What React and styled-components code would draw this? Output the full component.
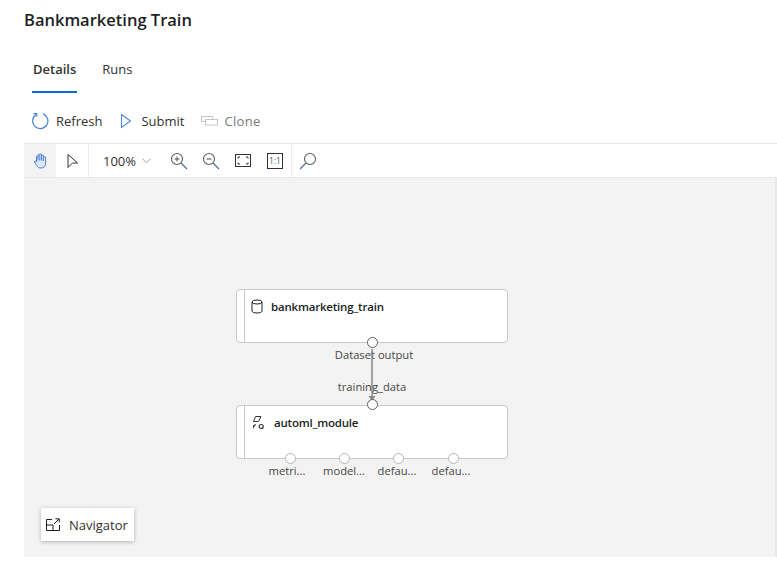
import React from "react";
import styled, { createGlobalStyle } from "styled-components";

const GlobalStyle = createGlobalStyle`
  html, body {
    margin: 0;
    padding: 0;
    background: #fff;
    overflow: hidden;
  }
  body {
    font-family: "Open Sans", "Noto Sans", "Liberation Sans", sans-serif;
    color: #201f1e;
  }
`;

const Page = styled.div`
  width: 777px;
  height: 577px;
  display: flex;
  flex-direction: column;
`;

const Title = styled.h1`
  margin: 0;
  padding: 9px 0 0 24px;
  height: 33px;
  font-size: 16.5px;
  line-height: 22px;
  font-weight: 600;
  color: #201f1e;
`;

const Tabs = styled.nav`
  display: flex;
  gap: 24px;
  margin-top: 12px;
  padding-left: 32px;
  height: 46px;
`;

const Tab = styled.div`
  height: 37px;
  box-sizing: content-box;
  padding: 0 1px;
  font-size: 13px;
  line-height: 30px;
  font-weight: ${({ $active }) => ($active ? 600 : 400)};
  color: #323130;
  border-bottom: 2px solid ${({ $active }) => ($active ? "#0f6cd6" : "transparent")};
`;

const CommandBar = styled.div`
  display: flex;
  align-items: center;
  height: 40px;
  margin-top: 1px;
  padding-left: 31px;
`;

const Command = styled.button`
  display: flex;
  align-items: center;
  gap: ${({ $gap }) => $gap}px;
  margin-right: ${({ $space }) => $space}px;
  padding: 0;
  border: 0;
  background: none;
  font: inherit;
  font-size: 13px;
  letter-spacing: ${({ disabled }) => (disabled ? "0.3px" : "0")};
  color: ${({ disabled }) => (disabled ? "#7a7876" : "#323130")};
`;

const Designer = styled.section`
  flex: 1;
  display: flex;
  flex-direction: column;
  margin-left: 24px;
  margin-bottom: 20px;
  margin-top: 2px;
`;

const Toolbar = styled.div`
  display: flex;
  align-items: stretch;
  height: 33px;
  border-top: 1px solid #e8e8e8;
  background: #fff;
`;

const ToolButton = styled.div`
  width: ${({ $width }) => $width || 32}px;
  display: flex;
  align-items: center;
  justify-content: center;
  background: ${({ $active }) => ($active ? "#f3f3f3" : "#fff")};
`;

const ToolDivider = styled.div`
  width: 1px;
  background: #ececec;
`;

const ZoomSelect = styled.div`
  display: flex;
  align-items: center;
  gap: 6px;
  width: 55px;
  margin-left: 14px;
  margin-right: 5px;
  font-size: 13px;
  color: #323130;
`;

const RatioBox = styled.div`
  width: 16px;
  height: 16px;
  border: 1px solid #323130;
  box-sizing: border-box;
  font-size: 8.5px;
  line-height: 14px;
  text-align: center;
  color: #605e5c;
`;

const Canvas = styled.div`
  position: relative;
  flex: 1;
  background: #f3f3f3;
  border-top: 1px solid #e8e8e8;
  border-right: 2px solid #e8e8e8;
`;

const Node = styled.div`
  position: absolute;
  left: 212px;
  top: ${({ $top }) => $top}px;
  width: 270px;
  height: 52px;
  display: flex;
  background: #fff;
  border: 1px solid #c8c8c8;
  border-radius: 4px;
`;

const NodeStripe = styled.div`
  width: 7px;
  border-right: 1px solid #c8c8c8;
`;

const NodeHead = styled.div`
  display: flex;
  align-items: center;
  gap: ${({ $gap }) => $gap}px;
  height: 33px;
  padding-left: ${({ $pad }) => $pad}px;
  font-size: 11.5px;
  font-weight: 600;
  letter-spacing: -0.2px;
  color: #201f1e;
`;

const Port = styled.div`
  position: absolute;
  left: ${({ $left }) => $left}px;
  top: ${({ $top }) => $top}px;
  width: 9px;
  height: 9px;
  background: #fff;
  border: 1px solid ${({ $dark }) => ($dark ? "#605e5c" : "#b5b5b5")};
  border-radius: 50%;
`;

const PortLabel = styled.div`
  position: absolute;
  left: ${({ $center }) => $center}px;
  top: ${({ $top }) => $top}px;
  transform: translateX(-50%);
  font-size: 11.2px;
  line-height: 14px;
  white-space: nowrap;
  color: #484644;
`;

const Wire = styled.svg`
  position: absolute;
  left: 342px;
  top: 171px;
`;

const Navigator = styled.div`
  position: absolute;
  left: 17px;
  top: 330px;
  width: 93px;
  height: 33px;
  display: flex;
  align-items: center;
  gap: 9px;
  padding-left: 5px;
  box-sizing: border-box;
  background: #fff;
  box-shadow: 0 1px 4px rgba(0, 0, 0, 0.28);
  font-size: 13px;
  color: #323130;
`;

const Icon = ({ size = 16, w, h, children }) => (
  <svg width={w || size} height={h || size} viewBox={`0 0 ${w || size} ${h || size}`} fill="none">
    {children}
  </svg>
);

const Magnifier = ({ sign, flip }) => (
  <Icon size={18}>
    <g stroke="#605e5c" strokeWidth="1.1" transform={flip ? "translate(18 0) scale(-1 1)" : undefined}>
      <circle cx="7" cy="7" r="5.5" />
      <path d="M11 11 L17 17" stroke="#4a6fa5" strokeWidth="1.2" />
      {sign && <path d="M4.5 7 H9.5" />}
      {sign === "plus" && <path d="M7 4.5 V9.5" />}
    </g>
  </Icon>
);

export default function App() {
  return (
    <Page>
      <GlobalStyle />
      <Title>Bankmarketing Train</Title>
      <Tabs>
        <Tab $active>Details</Tab>
        <Tab>Runs</Tab>
      </Tabs>
      <CommandBar>
        <Command $gap={7} $space={18}>
          <Icon size={18}>
            <path d="M5.2 2.6 A7.6 7.6 0 1 0 12 1.9" stroke="#3f7fdc" strokeWidth="1.2" />
            <path d="M2.6 1.6 H5.8 V4.8" stroke="#3f7fdc" strokeWidth="1.1" />
          </Icon>
          Refresh
        </Command>
        <Command $gap={9} $space={16}>
          <Icon w={12} h={16}>
            <path d="M1.5 1.5 L10.5 8 L1.5 14.5 Z" stroke="#4a8ae0" strokeWidth="1.1" />
          </Icon>
          Submit
        </Command>
        <Command disabled $gap={7}>
          <Icon w={17} h={10}>
            <path d="M0.5 0.5 H11.5 V3 M0.5 0.5 V5.5 H4" stroke="#c8c6c4" />
            <rect x="4.5" y="3.5" width="12" height="5.5" stroke="#c8c6c4" />
          </Icon>
          Clone
        </Command>
      </CommandBar>
      <Designer>
        <Toolbar>
          <ToolButton $active>
            <Icon w={15} h={16}>
              <path
                d="M3.5 9 V3.6 C3.5 2.6 5 2.6 5 3.6 V2 C5 1 6.8 1 6.8 2 V1.8 C6.8 0.8 8.6 0.8 8.6 1.8 V2.6 C8.6 1.8 10.4 1.8 10.4 2.8 V4 C10.4 3.2 12.6 3.2 12.6 4.4 V10.5 C12.6 13.5 10.8 15 8 15 C5.8 15 4.6 14 3.6 12.4 L1.2 8.8 C1.8 7.6 3 8 3.5 9 M5 3.6 V7.5 M6.8 2 V7.5 M8.6 2.6 V7.5 M10.4 4 V8"
                stroke="#4a7fd4"
                strokeWidth="1"
                fill="#dfe7f5"
              />
            </Icon>
          </ToolButton>
          <ToolButton>
            <Icon w={13} h={16}>
              <path d="M2 1.5 L11.5 10 H6.5 L2 14.5 Z" stroke="#323130" strokeWidth="1" />
            </Icon>
          </ToolButton>
          <ToolDivider />
          <ZoomSelect>
            100%
            <Icon w={9} h={6}>
              <path d="M0.5 0.8 L4.5 4.8 L8.5 0.8" stroke="#a19f9d" />
            </Icon>
          </ZoomSelect>
          <ToolButton>
            <Magnifier sign="plus" />
          </ToolButton>
          <ToolButton>
            <Magnifier sign="minus" />
          </ToolButton>
          <ToolButton>
            <Icon w={16} h={13}>
              <rect x="0.5" y="0.5" width="15" height="12" stroke="#323130" />
              <path d="M3 4.5 V3 H5 M11 3 H13 V4.5 M13 8.5 V10 H11 M5 10 H3 V8.5" stroke="#323130" />
            </Icon>
          </ToolButton>
          <ToolButton>
            <RatioBox>1:1</RatioBox>
          </ToolButton>
          <ToolDivider />
          <ToolButton $width={32}>
            <Magnifier flip />
          </ToolButton>
        </Toolbar>
        <Canvas>
          <Node $top={111}>
            <NodeStripe />
            <NodeHead $gap={8} $pad={6}>
              <Icon w={12} h={15}>
                <ellipse cx="6" cy="3" rx="5" ry="2" stroke="#201f1e" />
                <path d="M1 3 V12 C1 13.2 3 14 6 14 C9 14 11 13.2 11 12 V3" stroke="#201f1e" />
              </Icon>
              bankmarketing_train
            </NodeHead>
          </Node>
          <PortLabel $center={350} $top={170}>Dataset output</PortLabel>
          <PortLabel $center={348} $top={202}>training_data</PortLabel>
          <Wire width="12" height="56" viewBox="0 0 12 56">
            <path d="M6 0 V50" stroke="#8a8886" strokeWidth="1.5" />
            <path d="M2.5 47 H9.5 L6 52 Z" fill="#8a8886" />
          </Wire>
          <Port $dark $left={342.5} $top={159} />
          <Node $top={227}>
            <NodeStripe />
            <NodeHead $gap={10} $pad={7}>
              <Icon w={12} h={16}>
                <path d="M3.5 1.5 H9 L6.5 6.5 H1.5 Z" stroke="#323130" />
                <path d="M1 10.5 L4.5 8.5 L1 14 Z" fill="#323130" />
                <circle cx="9.2" cy="11.5" r="2" stroke="#323130" strokeWidth="1.2" />
              </Icon>
              automl_module
            </NodeHead>
          </Node>
          <Port $dark $left={342.5} $top={221} />
          <Port $left={260.5} $top={275} />
          <Port $left={315} $top={275} />
          <Port $left={369} $top={275} />
          <Port $left={423.5} $top={275} />
          <PortLabel $center={263} $top={286}>metri...</PortLabel>
          <PortLabel $center={320} $top={286}>model...</PortLabel>
          <PortLabel $center={373} $top={286}>defau...</PortLabel>
          <PortLabel $center={427} $top={286}>defau...</PortLabel>
          <Navigator>
            <Icon w={14} h={13}>
              <path d="M6 1.5 H0.5 V12.5 H13.5 V7 M0.5 7 H7 V12.5" stroke="#201f1e" />
              <path d="M8 6 L13 1 M9.5 0.8 H13.2 V4.5" stroke="#201f1e" />
            </Icon>
            Navigator
          </Navigator>
        </Canvas>
      </Designer>
    </Page>
  );
}
